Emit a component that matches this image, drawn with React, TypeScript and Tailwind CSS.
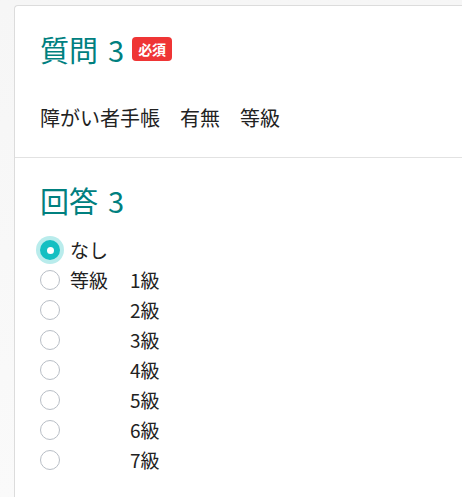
const grades = ["1級", "2級", "3級", "4級", "5級", "6級", "7級"];

function Radio({ checked }: { checked?: boolean }) {
  if (checked) {
    return (
      <span className="flex h-5 w-5 shrink-0 items-center justify-center rounded-full bg-[#14bfc2] ring-4 ring-[#b9ecec]">
        <span className="h-[7px] w-[7px] rounded-full bg-white" />
      </span>
    );
  }
  return <span className="h-5 w-5 shrink-0 rounded-full border border-[#b8bec6] bg-white" />;
}

function Heading({ label, num }: { label: string; num: number }) {
  return (
    <h2 className="flex text-[29px] leading-[36px] text-[#00807f]">
      <span>{label}</span>
      <span className="ml-[10px]">{num}</span>
    </h2>
  );
}

export default function App() {
  return (
    <div
      className="min-h-[497px] bg-gradient-to-b from-[#f6f6f6] to-[#fafafa] pl-[14px] pt-[5px]"
      style={{ fontFamily: '"Noto Sans CJK JP", "Noto Sans", sans-serif' }}
    >
      <div className="min-h-[492px] rounded-tl-[4px] border-l border-t border-[#dcdcdc] bg-white">
        {/* 質問 */}
        <div className="border-b border-[#e2e2e2] pl-[25px] pt-[25px] pb-[25px]">
          <div className="flex items-center gap-[8px]">
            <Heading label="質問" num={3} />
            <span className="rounded-[4px] bg-[#ef3535] px-[6px] py-[2px] text-[14px] font-bold leading-[20px] text-white">
              必須
            </span>
          </div>
          <p className="mt-[37px] text-[20px] leading-[28px] text-[#222]">
            障がい者手帳　有無　等級
          </p>
        </div>

        {/* 回答 */}
        <div className="pl-[25px] pt-[24px]">
          <Heading label="回答" num={3} />
          <div className="mt-[17px] flex flex-col">
            <label className="flex h-[30px] items-center gap-[10px] text-[19px] text-[#222]">
              <Radio checked />
              <span>なし</span>
            </label>
            {grades.map((g, i) => (
              <label
                key={g}
                className="flex h-[30px] items-center gap-[10px] text-[19px] text-[#222]"
              >
                <Radio />
                <span className="w-[50px]">{i === 0 ? "等級" : ""}</span>
                <span>{g}</span>
              </label>
            ))}
          </div>
        </div>
      </div>
    </div>
  );
}
